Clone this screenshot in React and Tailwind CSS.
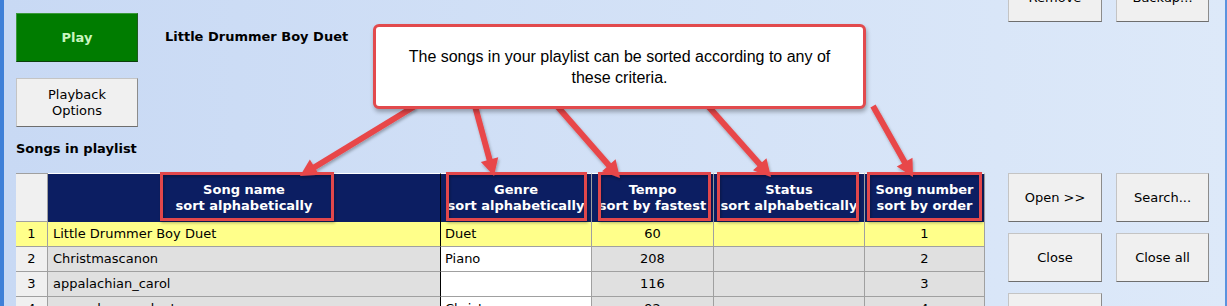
import React from "react";

const font = { fontFamily: '"DejaVu Sans", Verdana, sans-serif' };

const rows = [
  { n: 1, name: "Little Drummer Boy Duet", genre: "Duet", tempo: "60", status: "", num: "1", hi: true },
  { n: 2, name: "Christmascanon", genre: "Piano", tempo: "208", status: "", num: "2" },
  { n: 3, name: "appalachian_carol", genre: "", tempo: "116", status: "", num: "3" },
  { n: 4, name: "greensleeves_duet", genre: "Christmas", tempo: "92", status: "", num: "4" },
];

const headers = [
  ["Song name", "sort alphabetically"],
  ["Genre", "sort alphabetically"],
  ["Tempo", "sort by fastest"],
  ["Status", "sort alphabetically"],
  ["Song number", "sort by order"],
];

function Btn({ children, className = "" }) {
  return (
    <div
      className={`shrink-0 flex items-center justify-center text-center text-[13px] leading-4 text-black bg-[#f0f0f0] border border-[#c4c4c4] border-b-[#6e6e6e] border-r-[#8c8c8c] ${className}`}
    >
      {children}
    </div>
  );
}

function Arrow({ x1, y1, x2, y2 }) {
  const dx = x2 - x1;
  const dy = y2 - y1;
  const len = Math.hypot(dx, dy);
  const ux = dx / len;
  const uy = dy / len;
  const px = -uy;
  const py = ux;
  const bx = x2 - ux * 17;
  const by = y2 - uy * 17;
  return (
    <g>
      <line x1={x1} y1={y1} x2={bx + ux * 3} y2={by + uy * 3} stroke="#e8474a" strokeWidth="6" />
      <polygon
        points={`${x2},${y2} ${bx + px * 9},${by + py * 9} ${bx - px * 9},${by - py * 9}`}
        fill="#e8474a"
      />
    </g>
  );
}

export default function App() {
  return (
    <div
      className="relative w-[1227px] h-[306px] overflow-hidden flex bg-gradient-to-r from-[#c8d9f4] to-[#dde9f9] border-l-[4px] border-l-[#3f80d8] border-r-[2px] border-r-[#5b93de]"
      style={font}
    >
      <div className="ml-[12px] w-[969px] shrink-0 flex flex-col">
        <div className="h-[173px] shrink-0 flex">
          <div className="w-[122px] flex flex-col">
            <div className="mt-[13px] h-[49px] shrink-0 flex items-center justify-center bg-[#007c00] border border-[#3a9a3a] border-b-[#0c3f0c] border-r-[#1f5a1f] text-[13px] font-bold text-[#c9f6bf]">
              Play
            </div>
            <Btn className="mt-[16px] h-[49px]">
              Playback
              <br />
              Options
            </Btn>
            <div className="mt-[14px] text-[13px] font-bold leading-4 whitespace-nowrap text-black">
              Songs in playlist
            </div>
          </div>
          <div className="ml-[27px] mt-[29px] text-[13px] font-bold leading-4 text-black whitespace-nowrap">
            Little Drummer Boy Duet
          </div>
        </div>

        <div className="shrink-0 grid grid-cols-[32px_393px_151px_122px_151px_120px] text-[13px] text-black">
          <div className="h-[49px] bg-[#f0f0f0] border-t border-r border-b border-[#a0a0a0]" />
          {headers.map(([a, b], i) => (
            <div
              key={a}
              className={`h-[49px] bg-[#0c1e62] border-t border-t-white flex flex-col items-center justify-center text-white font-bold leading-4 whitespace-nowrap border-r ${i === 0 ? "border-r-black" : "border-r-[#a0a0a0]"}`}
            >
              <span>{a}</span>
              <span>{b}</span>
            </div>
          ))}
          {rows.map((r) => {
            const cell = r.hi ? "bg-[#ffff8a]" : "bg-[#e0e0e0]";
            const genreBg = r.hi ? "bg-[#ffff8a]" : "bg-white";
            const base = "h-[25px] flex items-center border-b border-r border-[#a0a0a0] whitespace-nowrap";
            return (
              <React.Fragment key={r.n}>
                <div className={`${base} justify-center ${r.hi ? "bg-[#ffff8a]" : "bg-[#f0f0f0]"}`}>{r.n}</div>
                <div className={`${base} ${cell} pl-[5px] border-r-black`}>{r.name}</div>
                <div className={`${base} ${genreBg} pl-[4px]`}>{r.genre}</div>
                <div className={`${base} ${cell} justify-center`}>{r.tempo}</div>
                <div className={`${base} ${cell}`}>{r.status}</div>
                <div className={`${base} ${cell} justify-center`}>{r.num}</div>
              </React.Fragment>
            );
          })}
        </div>
      </div>

      <div className="ml-[23px] w-[201px] shrink-0 flex flex-col">
        <div className="-mt-[27px] shrink-0 flex gap-[14px]">
          <Btn className="w-[94px] h-[49px]">Remove</Btn>
          <Btn className="w-[93px] h-[49px]">Backup...</Btn>
        </div>
        <div className="mt-[151px] shrink-0 flex gap-[14px]">
          <Btn className="w-[94px] h-[49px]">Open &gt;&gt;</Btn>
          <Btn className="w-[93px] h-[49px]">Search...</Btn>
        </div>
        <div className="mt-[11px] shrink-0 flex gap-[14px]">
          <Btn className="w-[94px] h-[49px]">Close</Btn>
          <Btn className="w-[93px] h-[49px]">Close all</Btn>
        </div>
        <div className="mt-[11px] shrink-0 flex gap-[14px]">
          <Btn className="w-[94px] h-[49px]">Delete</Btn>
        </div>
      </div>

      <svg
        className="absolute left-[-4px] top-0 pointer-events-none"
        width="1227"
        height="306"
        viewBox="0 0 1227 306"
      >
        <defs>
          <filter id="sh" x="-10%" y="-10%" width="120%" height="130%">
            <feDropShadow dx="1" dy="2" stdDeviation="1.5" floodColor="#000" floodOpacity="0.3" />
          </filter>
        </defs>
        <g filter="url(#sh)">
          <rect x="161.5" y="173.5" width="171" height="46" fill="none" stroke="#e2474b" strokeWidth="3" />
          <rect x="447.5" y="173.5" width="138" height="46" fill="none" stroke="#e2474b" strokeWidth="3" />
          <rect x="599.5" y="173.5" width="110" height="46" fill="none" stroke="#e2474b" strokeWidth="3" />
          <rect x="718.5" y="173.5" width="139" height="46" fill="none" stroke="#e2474b" strokeWidth="3" />
          <rect x="868.5" y="173.5" width="112" height="46" fill="none" stroke="#e2474b" strokeWidth="3" />
          <Arrow x1={415} y1={106} x2={300} y2={176} />
          <Arrow x1={475} y1={106} x2={494} y2={176} />
          <Arrow x1={557} y1={106} x2={620} y2={178} />
          <Arrow x1={708} y1={106} x2={771} y2={177} />
          <Arrow x1={873} y1={106} x2={913} y2={177} />
        </g>
      </svg>

      <div
        className="absolute left-[369px] top-[24px] w-[493px] h-[85px] bg-white border-[3px] border-[#e24a4d] rounded-[6px] shadow-[1px_3px_4px_rgba(0,0,0,0.3)] flex items-center justify-center text-center text-[16px] leading-[21px] text-black"
        style={{ fontFamily: '"Liberation Sans", Arial, sans-serif' }}
      >
        <div className="pt-[1px]">
          The songs in your playlist can be sorted according to any of
          <br />
          these criteria.
        </div>
      </div>
    </div>
  );
}
